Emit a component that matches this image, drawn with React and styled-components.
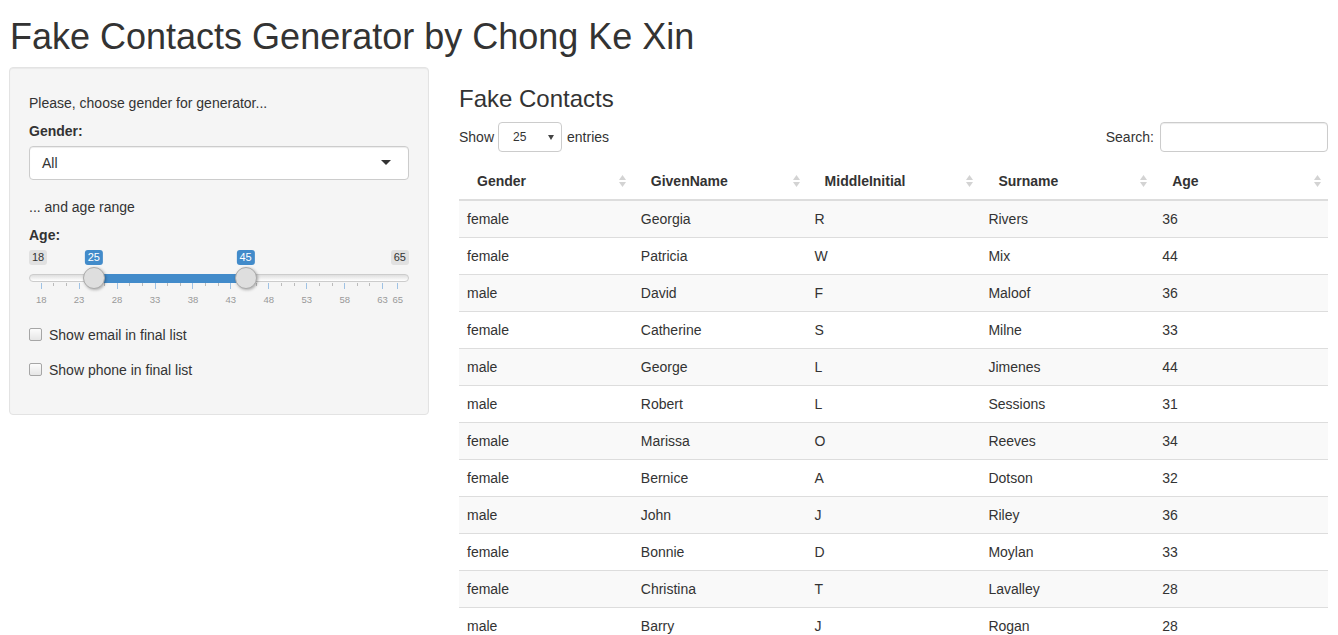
import React from "react";
import styled, { createGlobalStyle } from "styled-components";

const GlobalStyle = createGlobalStyle`
  html, body {
    margin: 0;
    padding: 0;
    overflow: hidden;
    background: #fff;
  }
  body {
    font-family: "Liberation Sans", Arial, sans-serif;
    font-size: 14px;
    line-height: 20px;
    color: #333;
  }
  * { box-sizing: border-box; }
`;

const Page = styled.div`
  padding: 0 10px 0 9px;
`;

const Title = styled.h1`
  margin: 17px 0 10px 1px;
  font-size: 36px;
  line-height: 39.6px;
  font-weight: 500;
  color: #333;
`;

const Row = styled.div`
  display: flex;
  align-items: flex-start;
`;

const Well = styled.div`
  width: 420px;
  flex: none;
  padding: 19px 19px 34px;
  background: #f5f5f5;
  border: 1px solid #e3e3e3;
  border-radius: 4px;
  box-shadow: inset 0 1px 1px rgba(0, 0, 0, 0.05);
`;

const Note = styled.div`
  margin-top: ${(p) => p.$top}px;
`;

const Label = styled.div`
  margin-top: 8px;
  margin-bottom: ${(p) => (p.$tight ? 0 : 5)}px;
  font-weight: bold;
`;

const Dropdown = styled.div`
  height: 34px;
  display: flex;
  align-items: center;
  justify-content: space-between;
  padding: 0 17px 0 12px;
  background: #fff;
  border: 1px solid #ccc;
  border-radius: 4px;
  box-shadow: inset 0 1px 1px rgba(0, 0, 0, 0.075);
`;

const Caret = styled.span`
  width: 0;
  height: 0;
  border-left: 5px solid transparent;
  border-right: 5px solid transparent;
  border-top: 5px solid #333;
`;

/* range slider */
const Slider = styled.div`
  position: relative;
  height: 70px;
  margin-bottom: 10px;
`;

const Bubble = styled.span`
  position: absolute;
  top: 5px;
  height: 15px;
  padding: 0 3px;
  font-size: 11px;
  line-height: 15px;
  border-radius: 3px;
  background: ${(p) => (p.$active ? "#428bca" : "#e1e1e1")};
  color: ${(p) => (p.$active ? "#fff" : "#333")};
  transform: ${(p) => (p.$center ? "translateX(-50%)" : "none")};
`;

const Track = styled.div`
  position: absolute;
  left: 0;
  right: 0;
  top: 29px;
  height: 8px;
  border: 1px solid #ccc;
  border-radius: 8px;
  background: linear-gradient(to bottom, #dedede, #fff);
`;

const Bar = styled.div`
  position: absolute;
  top: 29px;
  height: 9px;
  background: #428bca;
`;

const Handle = styled.div`
  position: absolute;
  top: 22px;
  width: 22px;
  height: 22px;
  margin-left: -11px;
  border-radius: 50%;
  background: #dedede;
  border: 1px solid #ababab;
  box-shadow: 1px 1px 3px rgba(0, 0, 0, 0.3);
`;

const Tick = styled.span`
  position: absolute;
  top: 38px;
  width: 1px;
  height: ${(p) => (p.$major ? 6 : 3)}px;
  background: ${(p) => (p.$major ? "#9fc2e4" : "#bbb")};
`;

const TickText = styled.span`
  position: absolute;
  top: 49px;
  font-size: 9.5px;
  line-height: 11px;
  color: #999;
  transform: translateX(-50%);
`;

const CheckRow = styled.label`
  display: flex;
  align-items: center;
  height: 20px;
  margin-bottom: 15px;
  &:last-child { margin-bottom: 0; }
`;

const Box = styled.span`
  width: 13px;
  height: 13px;
  margin-right: 7px;
  border: 1px solid #a6a6a6;
  border-radius: 2px;
  background: linear-gradient(to bottom, #fcfcfc, #e6e6e6);
`;

/* main panel */
const Main = styled.div`
  flex: 1;
  margin-left: 30px;
`;

const SubTitle = styled.h3`
  margin: 19px 0 10px;
  font-size: 24px;
  line-height: 26.4px;
  font-weight: 500;
`;

const Controls = styled.div`
  display: flex;
  justify-content: space-between;
  align-items: center;
  height: 30px;
`;

const Inline = styled.div`
  display: flex;
  align-items: center;
`;

const SmallSelect = styled.div`
  width: 64px;
  height: 30px;
  margin: 0 5px 0 4px;
  padding: 0 7px 0 14px;
  display: flex;
  align-items: center;
  justify-content: space-between;
  font-size: 12px;
  border: 1px solid #ccc;
  border-radius: 4px;
  background: #fff;
`;

const MiniCaret = styled.span`
  width: 0;
  height: 0;
  border-left: 3px solid transparent;
  border-right: 3px solid transparent;
  border-top: 5px solid #444;
`;

const SearchBox = styled.div`
  width: 168px;
  height: 30px;
  margin-left: 6px;
  border: 1px solid #ccc;
  border-radius: 4px;
  background: #fff;
  box-shadow: inset 0 1px 1px rgba(0, 0, 0, 0.075);
`;

const Table = styled.table`
  width: 100%;
  margin-top: 11px;
  border-collapse: collapse;
  table-layout: fixed;
`;

const Th = styled.th`
  padding: 8px 6px 8px 18px;
  text-align: left;
  border-bottom: 2px solid #ddd;
`;

const HeadCell = styled.div`
  display: flex;
  align-items: center;
  justify-content: space-between;
`;

const Tr = styled.tr`
  background: ${(p) => (p.$odd ? "#f9f9f9" : "#fff")};
`;

const Td = styled.td`
  padding: 8px;
  border-top: 1px solid #ddd;
`;

const SortIcon = () => (
  <svg width="9" height="14" viewBox="0 0 9 14">
    <path d="M4.5 1 L8 6 L1 6 Z" fill="#d3d3d3" />
    <path d="M4.5 13 L8 8 L1 8 Z" fill="#d3d3d3" />
  </svg>
);

const MIN = 18;
const MAX = 65;
const X0 = 11.7;
const SCALE = 356.6 / (MAX - MIN);
const pos = (v) => X0 + (v - MIN) * SCALE;

const majors = [18, 23, 28, 33, 38, 43, 48, 53, 58, 63, 65];
const minors = [];
majors.slice(0, 10).forEach((m) => {
  if (m + 5 <= 63) {
    minors.push(m + 5 / 3, m + 10 / 3);
  }
});

const rows = [
  ["female", "Georgia", "R", "Rivers", 36],
  ["female", "Patricia", "W", "Mix", 44],
  ["male", "David", "F", "Maloof", 36],
  ["female", "Catherine", "S", "Milne", 33],
  ["male", "George", "L", "Jimenes", 44],
  ["male", "Robert", "L", "Sessions", 31],
  ["female", "Marissa", "O", "Reeves", 34],
  ["female", "Bernice", "A", "Dotson", 32],
  ["male", "John", "J", "Riley", 36],
  ["female", "Bonnie", "D", "Moylan", 33],
  ["female", "Christina", "T", "Lavalley", 28],
  ["male", "Barry", "J", "Rogan", 28],
];

const columns = ["Gender", "GivenName", "MiddleInitial", "Surname", "Age"];

export default function App() {
  const from = 25;
  const to = 45;

  return (
    <Page>
      <GlobalStyle />
      <Title>Fake Contacts Generator by Chong Ke Xin</Title>
      <Row>
        <Well>
          <Note $top={6}>Please, choose gender for generator...</Note>
          <Label>Gender:</Label>
          <Dropdown>
            <span>All</span>
            <Caret />
          </Dropdown>
          <Note $top={17}>... and age range</Note>
          <Label $tight>Age:</Label>
          <Slider>
            <Track />
            <Bar style={{ left: pos(from), width: pos(to) - pos(from) }} />
            {minors.map((v) => (
              <Tick key={"m" + v} style={{ left: pos(v) }} />
            ))}
            {majors.map((v) => (
              <Tick key={v} $major style={{ left: pos(v) }} />
            ))}
            {majors.map((v) => (
              <TickText key={"t" + v} style={{ left: pos(v) + 0.5 }}>
                {v}
              </TickText>
            ))}
            <Bubble style={{ left: 0 }}>{MIN}</Bubble>
            <Bubble style={{ right: 0 }}>{MAX}</Bubble>
            <Bubble $active $center style={{ left: pos(from) }}>
              {from}
            </Bubble>
            <Bubble $active $center style={{ left: pos(to) }}>
              {to}
            </Bubble>
            <Handle style={{ left: pos(from) }} />
            <Handle style={{ left: pos(to) }} />
          </Slider>
          <CheckRow>
            <Box />
            Show email in final list
          </CheckRow>
          <CheckRow>
            <Box />
            Show phone in final list
          </CheckRow>
        </Well>

        <Main>
          <SubTitle>Fake Contacts</SubTitle>
          <Controls>
            <Inline>
              Show
              <SmallSelect>
                <span>25</span>
                <MiniCaret />
              </SmallSelect>
              entries
            </Inline>
            <Inline>
              Search:
              <SearchBox />
            </Inline>
          </Controls>
          <Table>
            <thead>
              <tr>
                {columns.map((c) => (
                  <Th key={c}>
                    <HeadCell>
                      {c}
                      <SortIcon />
                    </HeadCell>
                  </Th>
                ))}
              </tr>
            </thead>
            <tbody>
              {rows.map((r, i) => (
                <Tr key={i} $odd={i % 2 === 0}>
                  {r.map((cell, j) => (
                    <Td key={j}>{cell}</Td>
                  ))}
                </Tr>
              ))}
            </tbody>
          </Table>
        </Main>
      </Row>
    </Page>
  );
}
